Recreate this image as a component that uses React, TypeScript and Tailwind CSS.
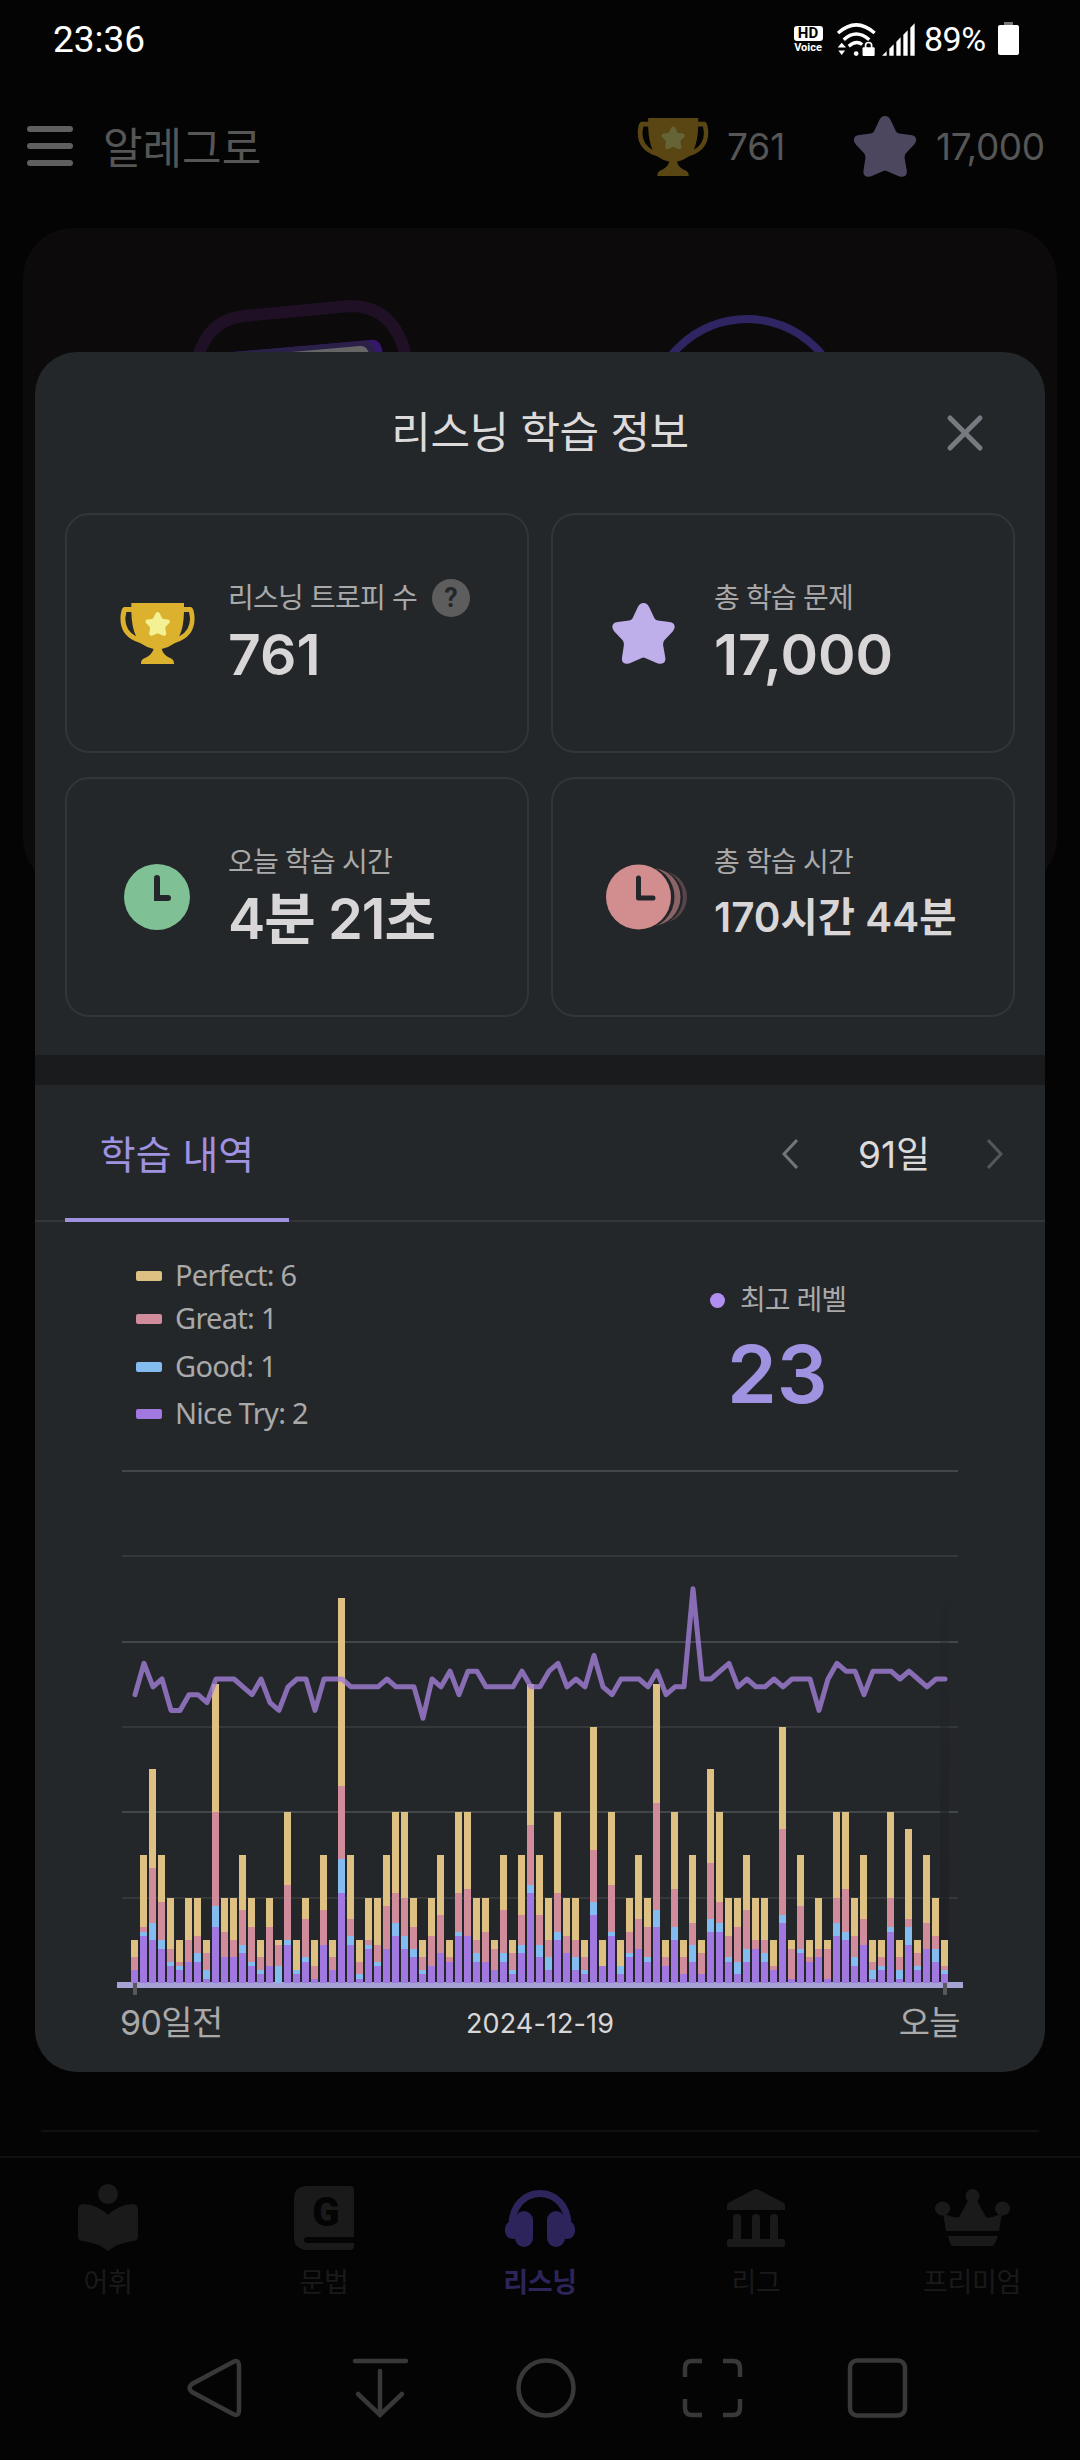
import type { ReactNode } from "react";
import clsx from "clsx";

// Running tops of each stacked bar: [niceTry, good, great, perfect]
const DAYS: number[][] = [
  [3, 3, 6, 10], [11, 12, 13, 30], [10, 14, 27, 50], [8, 10, 19, 30], [4, 5, 8, 20],
  [3, 4, 5, 10], [5, 5, 10, 20], [5, 7, 11, 20], [1, 3, 7, 10], [13, 18, 40, 70],
  [6, 6, 12, 20], [6, 6, 10, 20], [7, 9, 17, 30], [4, 5, 13, 20], [2, 3, 6, 10],
  [4, 4, 13, 20], [0, 4, 9, 10], [9, 10, 23, 40], [2, 3, 3, 10], [5, 6, 15, 20],
  [1, 1, 4, 10], [9, 9, 17, 30], [3, 3, 6, 10], [21, 29, 46, 90], [9, 11, 15, 30],
  [1, 2, 5, 10], [8, 9, 10, 20], [4, 5, 9, 20], [8, 8, 18, 30], [11, 14, 21, 40],
  [8, 11, 20, 40], [6, 8, 13, 20], [2, 3, 6, 10], [4, 4, 11, 20], [7, 7, 16, 30],
  [5, 5, 6, 10], [11, 12, 21, 40], [11, 11, 22, 40], [5, 7, 10, 20], [5, 5, 12, 20],
  [3, 3, 8, 10], [5, 7, 17, 30], [2, 3, 7, 10], [7, 9, 16, 30], [21, 23, 37, 70],
  [6, 9, 16, 30], [3, 6, 10, 20], [10, 12, 21, 40], [7, 7, 11, 20], [3, 6, 10, 20],
  [2, 3, 6, 10], [16, 19, 31, 60], [4, 4, 4, 10], [11, 12, 23, 40], [2, 4, 4, 10],
  [6, 7, 12, 20], [8, 8, 15, 30], [5, 6, 13, 20], [13, 17, 42, 70], [4, 4, 6, 10],
  [10, 13, 22, 40], [2, 2, 6, 10], [5, 9, 14, 30], [2, 2, 7, 10], [12, 15, 28, 50],
  [12, 14, 19, 40], [5, 6, 11, 20], [2, 5, 13, 20], [5, 8, 17, 30], [8, 8, 10, 20],
  [5, 7, 10, 20], [3, 3, 4, 10], [14, 16, 36, 60], [1, 1, 8, 10], [7, 8, 18, 30],
  [5, 5, 6, 10], [6, 6, 8, 20], [1, 1, 8, 10], [11, 14, 20, 40], [10, 12, 22, 40],
  [4, 6, 11, 20], [9, 9, 15, 30], [1, 3, 5, 10], [3, 4, 6, 10], [12, 13, 20, 40],
  [1, 3, 6, 10], [9, 13, 15, 36], [3, 4, 7, 10], [8, 8, 14, 30], [5, 8, 11, 20],
  [2, 3, 4, 10],
];

const LEVELS = [
  10, 14, 11, 12, 8, 8, 10, 10, 9, 12, 12, 12, 11, 10, 12, 9, 8, 11, 12, 12, 8, 12, 12, 12,
  11, 11, 11, 11, 12, 11, 11, 11, 7, 12, 11, 13, 10, 13, 13, 11, 11, 11, 11, 13, 11, 11, 13,
  14, 11, 12, 11, 15, 11, 10, 12, 12, 12, 11, 13, 10, 11, 11, 23.5, 12, 12, 13, 14, 11, 12, 11,
  11, 12, 11, 12, 12, 12, 8, 12, 14, 13, 13, 10, 13, 13, 13, 12, 13, 12, 11, 12, 12,
];

const STACK_COLORS = ["#a078e0", "#84bcf0", "#d08c9b", "#dec083"];

const LEGEND = [
  { label: "Perfect: 6", swatch: "bg-[#dec083]", row: "h-[44px]" },
  { label: "Great: 1", swatch: "bg-[#d08c9b]", row: "h-[42px]" },
  { label: "Good: 1", swatch: "bg-[#84bcf0]", row: "h-[53px]" },
  { label: "Nice Try: 2", swatch: "bg-[#a078e0]", row: "h-[42px]" },
];

const STAR_PATH =
  "M95 0Q106 0 112 12L128 46Q131 52 138 53L173 57Q189 59 189 72Q189 80 183 86L158 112Q153 118 154 126L161 166Q163 182 147 183Q140 184 133 180L100 166Q95 163 90 166L57 180Q50 184 43 183Q28 182 30 166L36 126Q37 118 32 112L7 86Q1 80 1 72Q1 59 17 57L52 53Q59 52 62 46L78 12Q84 0 95 0Z";

function StarIcon({ className }: { className: string }) {
  return (
    <svg viewBox="0 0 190 184" className={className} fill="currentColor">
      <path d={STAR_PATH} />
    </svg>
  );
}

function TrophyIcon({ className, star }: { className: string; star: string }) {
  return (
    <svg viewBox="0 0 225 183" className={className}>
      <path
        fill="currentColor"
        fillRule="evenodd"
        d="M34 0H192V12H212Q220 12 223 35Q230 100 165 120Q145 134 125 138Q130 158 155 167Q163 171 162 183H63Q62 171 70 167Q95 158 101 138Q81 134 60 120Q-5 100 2 35Q5 12 13 12H34ZM19 27H34Q35 72 48 100Q15 82 16 45ZM207 27H192Q191 72 178 100Q211 82 210 45Z"
      />
      <path fill={star} transform="translate(76 27) scale(.39)" d={STAR_PATH} />
    </svg>
  );
}

function ClockIcon() {
  return (
    <svg viewBox="0 0 66 66" className="h-[66px] w-[66px]">
      <circle cx="33" cy="33" r="33" fill="#7fc095" />
      <path d="M33 14V34H44" fill="none" stroke="#24272a" strokeWidth="6" strokeLinecap="round" />
    </svg>
  );
}

function StackedClockIcon() {
  return (
    <svg viewBox="0 0 82 66" className="ml-[8px] h-[66px] w-[82px] shrink-0">
      <circle cx="55" cy="33" r="26" fill="#574548" />
      <circle cx="48.5" cy="33" r="28.5" fill="#24272a" />
      <circle cx="45.5" cy="33" r="29" fill="#8b6467" />
      <circle cx="36.5" cy="33" r="32" fill="#24272a" />
      <circle cx="32.5" cy="33" r="32.5" fill="#d28d8e" />
      <path
        d="M32.5 14V34H47"
        fill="none"
        stroke="#24272a"
        strokeWidth="5"
        strokeLinecap="round"
        strokeLinejoin="round"
      />
    </svg>
  );
}

function StatusBar() {
  return (
    <div className="flex h-[79px] items-center justify-between pl-[53px] pr-[61px] font-[Roboto,sans-serif] text-white">
      <span className="text-[37px]">23:36</span>
      <div className="flex items-center">
        <div className="mr-[14px] flex w-[30px] flex-col items-center">
          <span className="flex h-[15px] w-[29px] items-center justify-center rounded-[3px] bg-white text-[15px] font-bold leading-none text-black">
            HD
          </span>
          <span className="mt-px text-[11px] font-bold leading-[11px]">Voice</span>
        </div>
        <svg viewBox="0 0 116 98" className="mr-[6px] h-[33px] w-[39px]">
          <g fill="none" stroke="#fff" strokeWidth="10">
            <path d="M3 30Q57 -19 112 30" />
            <path d="M20 50Q57 16 96 50" />
            <path d="M35 69Q57 50 75 64" />
            <path d="M85 74V66Q85 58 94 58Q103 58 103 66V74" strokeWidth="5" />
          </g>
          <g fill="#fff">
            <circle cx="57" cy="91" r="7" />
            <path d="M2 73L14 59L27 73ZM4 82H24L14 95Z" />
            <rect x="76" y="72" width="36" height="26" rx="3" />
          </g>
        </svg>
        <svg viewBox="0 0 99 98" className="mr-[9px] h-[33px] w-[33px]" fill="#fff">
          <path d="M0 98L14 84V98ZM22 98V77L35 63V98ZM43 98V56L56 42V98ZM64 98V35L77 21V98ZM85 98V14L98 0V98Z" />
        </svg>
        <span className="w-[65px] text-[34px] tracking-[-0.5px]">89%</span>
        <div className="ml-[9px] flex flex-col items-center pb-[2px]">
          <div className="h-[3px] w-[9px] bg-[#777]" />
          <div className="h-[30px] w-[21px] rounded-[2px] bg-white" />
        </div>
      </div>
    </div>
  );
}

function AppHeader() {
  return (
    <header className="flex h-[149px] items-start pl-[27px] pr-[35px] text-[#565656]">
      <div className="mt-[47px] flex w-[46px] flex-col gap-[11px]">
        <div className="h-[6px] rounded-full bg-[#5f5f5f]" />
        <div className="h-[6px] rounded-full bg-[#5f5f5f]" />
        <div className="h-[6px] rounded-full bg-[#5f5f5f]" />
      </div>
      <h1 className="ml-[30px] mt-[38px] text-[43px] leading-[62px]">알레그로</h1>
      <div className="ml-auto flex h-[135px] items-center">
        <TrophyIcon className="h-[58px] w-[72px] text-[#594612]" star="#656436" />
        <span className="ml-[18px] w-[126px] text-[37px]">761</span>
        <StarIcon className="h-[61px] w-[64px] text-[#4c465e]" />
        <span className="ml-[19px] w-[109px] text-[37px] tracking-[-0.4px]">17,000</span>
      </div>
    </header>
  );
}

function Hero() {
  return (
    <div className="mx-[23px] h-[660px] rounded-[50px] bg-[#0c0a0b]">
      <svg viewBox="23 228 1034 140" className="h-[140px] w-[1034px]" fill="none">
        <path d="M198 356Q210 319 244 316L350 306Q397 306 407 362" stroke="#1f1026" strokeWidth="12" />
        <path d="M210 354L370 340Q384 338 383 362L210 370Z" fill="#35186b" />
        <path d="M210 354L364 341Q376 340 377 362L210 370Z" fill="#2b2148" />
        <path d="M280 353L360 346Q369 345 371 362H280Z" fill="#666" />
        <circle cx="747" cy="415.6" r="96.6" stroke="#2e2562" strokeWidth="8" />
      </svg>
    </div>
  );
}

function StatCard({
  icon,
  label,
  value,
  valueClass = "text-[57px]",
  help = false,
}: {
  icon: ReactNode;
  label: string;
  value: string;
  valueClass?: string;
  help?: boolean;
}) {
  return (
    <div className="flex h-[240px] items-center rounded-[24px] border-2 border-[#333538] pl-[46px]">
      <div className="flex w-[115px] pl-[3px]">
        <div className="flex w-[82px] justify-center">{icon}</div>
      </div>
      <div className="flex h-[110px] flex-col">
        <div className="flex h-[40px] items-center text-[28px] tracking-[-0.8px] text-[#a9a9a9]">
          <span>{label}</span>
          {help && (
            <span className="ml-[15px] flex h-[38px] w-[38px] items-center justify-center rounded-full bg-[#5d5d5d] font-[Roboto] text-[27px] font-bold tracking-normal text-[#24272a]">
              ?
            </span>
          )}
        </div>
        <div
          className={clsx(
            "flex h-[74px] items-center whitespace-nowrap font-semibold text-[#d9d6d8]",
            valueClass,
          )}
        >
          {value}
        </div>
      </div>
    </div>
  );
}

function HistoryChart() {
  const unit = 4.275;
  const base = 523;
  const line = LEVELS.map((v, i) => `${18 + i * 9},${219 - (v - 12) * 7.85}`).join(" ");

  return (
    <svg viewBox="0 0 846 540" className="ml-[82px] h-[540px] w-[846px]">
      <defs>
        <linearGradient id="today" x1="0" y1="0" x2="0" y2="1">
          <stop offset="0" stopColor="#1f2023" stopOpacity="0" />
          <stop offset="1" stopColor="#1f2023" />
        </linearGradient>
      </defs>
      {[10, 95, 181, 266, 351, 437].map((y, i) => (
        <rect key={y} x="5" y={y} width="836" height="2" fill={i % 2 ? "#34383b" : "#42474a"} />
      ))}
      <rect x="823" y="70" width="9" height="452" fill="url(#today)" />
      <rect x="0" y="522" width="846" height="6" fill="#a5a2d4" />
      <g shapeRendering="crispEdges">
        {DAYS.map((tops, i) =>
          tops.map((top, s) => {
            const from = s === 0 ? 0 : tops[s - 1];
            if (top === from) return null;
            const y = Math.round(base - top * unit);
            return (
              <rect
                key={`${i}-${s}`}
                x={14 + i * 9}
                y={y}
                width="7"
                height={Math.round(base - from * unit) - y}
                fill={STACK_COLORS[s]}
              />
            );
          }),
        )}
      </g>
      <polyline
        points={line}
        fill="none"
        stroke="#a17fd8"
        strokeOpacity=".8"
        strokeWidth="5"
        strokeLinejoin="round"
        strokeLinecap="round"
      />
      <rect x="16" y="523" width="4" height="12" fill="#58585a" />
      <rect x="826" y="523" width="4" height="12" fill="#58585a" />
    </svg>
  );
}

function StudyModal() {
  return (
    <div className="absolute left-[35px] top-[352px] h-[1720px] w-[1010px] overflow-hidden rounded-[42px] bg-[#24272a]">
      <div className="relative flex h-[161px] items-center justify-center">
        <h2 className="text-[43px] tracking-[-0.4px] text-[#dcdadb]">리스닝 학습 정보</h2>
        <svg viewBox="0 0 38 38" className="absolute right-[61px] top-[62px] h-[38px] w-[38px]">
          <path d="M4 4L34 34M34 4L4 34" stroke="#777b81" strokeWidth="5" strokeLinecap="round" />
        </svg>
      </div>

      <div className="grid grid-cols-2 gap-x-[22px] gap-y-6 px-[30px]">
        <StatCard
          icon={<TrophyIcon className="h-[61px] w-[75px] text-[#dbb12d]" star="#f3f193" />}
          label="리스닝 트로피 수"
          value="761"
          help
        />
        <StatCard
          icon={<StarIcon className="h-[61px] w-[63px] text-[#beaeea]" />}
          label="총 학습 문제"
          value="17,000"
        />
        <StatCard
          icon={<ClockIcon />}
          label="오늘 학습 시간"
          value="4분 21초"
          valueClass="text-[56px] tracking-[-1px]"
        />
        <StatCard
          icon={<StackedClockIcon />}
          label="총 학습 시간"
          value="170시간 44분"
          valueClass="pt-[2px] text-[40.500px]"
        />
      </div>

      <div className="mt-[38px] h-[30px] bg-[#1a1b1d]" />

      <div className="flex h-[137px] items-start justify-between border-b-2 border-[#333538] pl-[30px] pr-[42px]">
        <div className="flex h-[137px] w-[224px] items-center justify-center border-b-4 border-[#9f92e0] pt-[7px] text-[39px] text-[#9f92e0]">
          학습 내역
        </div>
        <div className="flex h-[137px] items-center">
          <svg viewBox="0 0 16 30" className="h-[30px] w-[16px]" fill="none" stroke="#6f777d" strokeWidth="3">
            <path d="M15 1L2 15L15 29" />
          </svg>
          <span className="w-[189px] pl-[3px] pt-[2px] text-center text-[37px] text-[#dcdadb]">91일</span>
          <svg viewBox="0 0 16 30" className="h-[30px] w-[16px]" fill="none" stroke="#50585e" strokeWidth="3">
            <path d="M1 1L14 15L1 29" />
          </svg>
        </div>
      </div>

      <div className="flex h-[238px] pl-[101px]">
        <div className="flex w-[574px] flex-col pt-[32px] font-['Noto_Sans',sans-serif] text-[29px] tracking-[-0.7px] text-[#a9a9a9]">
          {LEGEND.map((item) => (
            <div key={item.label} className={clsx("flex items-center", item.row)}>
              <span className={clsx("mr-[13px] h-[10px] w-[26px] rounded-[2px]", item.swatch)} />
              <span className="-mt-[2px]">{item.label}</span>
            </div>
          ))}
        </div>
        <div className="pt-[57px]">
          <div className="flex h-[42px] items-center text-[28px] tracking-[-1px] text-[#a9a9a9]">
            <span className="mr-[15px] h-[15px] w-[15px] rounded-full bg-[#b18ff0]" />
            최고 레벨
          </div>
          <div className="ml-[17px] mt-[3px] text-[80px] font-semibold leading-[100px] text-[#9f92e0]">
            23
          </div>
        </div>
      </div>

      <HistoryChart />

      <div className="-mt-[8px] flex h-[60px] items-center justify-between px-[85px] text-[34px] tracking-[-0.6px] text-[#a9a9a9]">
        <span className="w-[120px]">90일전</span>
        <span className="pt-[5px] text-[27px] tracking-[0.1px] text-[#d9d6d8]">2024-12-19</span>
        <span className="w-[120px] text-right">오늘</span>
      </div>
    </div>
  );
}

const TABS = [
  {
    label: "어휘",
    icon: (
      <svg viewBox="0 0 60 67" className="h-[67px] w-[60px]" fill="currentColor">
        <circle cx="30" cy="10" r="10" />
        <path d="M30 31Q20 21 6 20Q0 20 0 26V52Q0 57 5 57Q20 59 30 67Q40 59 55 57Q60 57 60 52V26Q60 20 54 20Q40 21 30 31Z" />
      </svg>
    ),
  },
  {
    label: "문법",
    icon: (
      <svg viewBox="0 0 60 64" className="h-[64px] w-[60px]" fill="currentColor">
        <path d="M12 0H56Q60 0 60 4V51H14Q10 51 10 54Q10 57 14 57H60V60Q60 64 56 64H12Q0 62 0 52V12Q0 1 12 0Z" />
        <text x="32" y="40" textAnchor="middle" fontFamily="Roboto" fontWeight="900" fontSize="40" fill="#040404">
          G
        </text>
      </svg>
    ),
  },
  {
    label: "리스닝",
    icon: (
      <svg viewBox="0 0 70 58" className="h-[58px] w-[70px]" fill="currentColor">
        <path d="M7 38C5 -8 65 -8 63 38" transform="translate(0 1)" fill="none" stroke="currentColor" strokeWidth="7" />
        <rect x="10" y="22" width="18" height="36" rx="9" />
        <rect x="42" y="22" width="18" height="36" rx="9" />
        <rect x="0" y="32" width="16" height="18" rx="8" />
        <rect x="54" y="32" width="16" height="18" rx="8" />
      </svg>
    ),
    active: true,
  },
  {
    label: "리그",
    icon: (
      <svg viewBox="0 0 58 58" className="h-[58px] w-[58px]" fill="currentColor">
        <path d="M26 1Q29 -1 32 1L57 14Q58 15 58 17V21H0V17Q0 15 1 14Z" />
        <rect x="6" y="25" width="8" height="28" rx="4" />
        <rect x="25" y="25" width="8" height="28" rx="4" />
        <rect x="43" y="25" width="8" height="28" rx="4" />
        <rect x="0" y="50" width="58" height="8" rx="2" />
      </svg>
    ),
  },
  {
    label: "프리미엄",
    icon: (
      <svg viewBox="0 0 75 57" className="h-[57px] w-[75px]" fill="currentColor">
        <ellipse cx="7.5" cy="19.5" rx="7.5" ry="7" />
        <circle cx="37.5" cy="7" r="7" />
        <ellipse cx="67.5" cy="19.5" rx="7.5" ry="7" />
        <path d="M8 24Q20 30 24 28L34 10H41L51 28Q55 30 67 24L64 42H11Z" />
        <path d="M13 47H63L60 54Q59 57 56 57H19Q16 57 15 54Z" />
      </svg>
    ),
  },
];

function TabBar() {
  return (
    <nav className="grid h-[163px] grid-cols-5 border-t-2 border-[#0e1212] pt-[21px]">
      {TABS.map((tab) => (
        <div
          key={tab.label}
          className={clsx("flex flex-col items-center", tab.active ? "font-bold text-[#2d245c]" : "text-[#1a1a1a]")}
        >
          <div className="flex h-[77px] items-center">{tab.icon}</div>
          <span className="mt-[7px] text-[27px] leading-[40px] tracking-[-0.3px]">{tab.label}</span>
        </div>
      ))}
    </nav>
  );
}

function SystemNav() {
  return (
    <div className="flex flex-1 items-center pb-[4px] pl-[131px]">
      {[
        <path key="back" d="M49 4Q55 1 55 8V52Q55 59 49 56L8 34Q3 30 8 26Z" />,
        <path key="down" d="M5 3H56M30 13V57M8 36L30 57L52 36" strokeLinecap="round" />,
        <circle key="home" cx="30" cy="30" r="27.5" />,
        <path key="shot" d="M3 19V10Q3 3 10 3H20M41 3H51Q58 3 58 10V19M58 41V50Q58 57 51 57H41M20 57H10Q3 57 3 50V41" />,
        <rect key="recent" x="2" y="2.5" width="55" height="55" rx="7" />,
      ].map((shape, i) => (
        <div key={i} className="flex w-[166px] justify-center">
          <svg viewBox="0 0 60 60" className="h-[60px] w-[60px] overflow-visible" fill="none" stroke="#383838" strokeWidth="4.5">
            {shape}
          </svg>
        </div>
      ))}
    </div>
  );
}

export default function App() {
  return (
    <div className="relative flex h-[2460px] w-[1080px] flex-col overflow-hidden bg-[#040404] font-[Inter,'Noto_Sans_CJK_KR',sans-serif]">
      <StatusBar />
      <AppHeader />
      <Hero />
      <div className="mx-[41px] mt-[1242px] h-[2px] bg-[#0d1111]" />
      <div className="h-[24px]" />
      <TabBar />
      <SystemNav />
      <StudyModal />
    </div>
  );
}
